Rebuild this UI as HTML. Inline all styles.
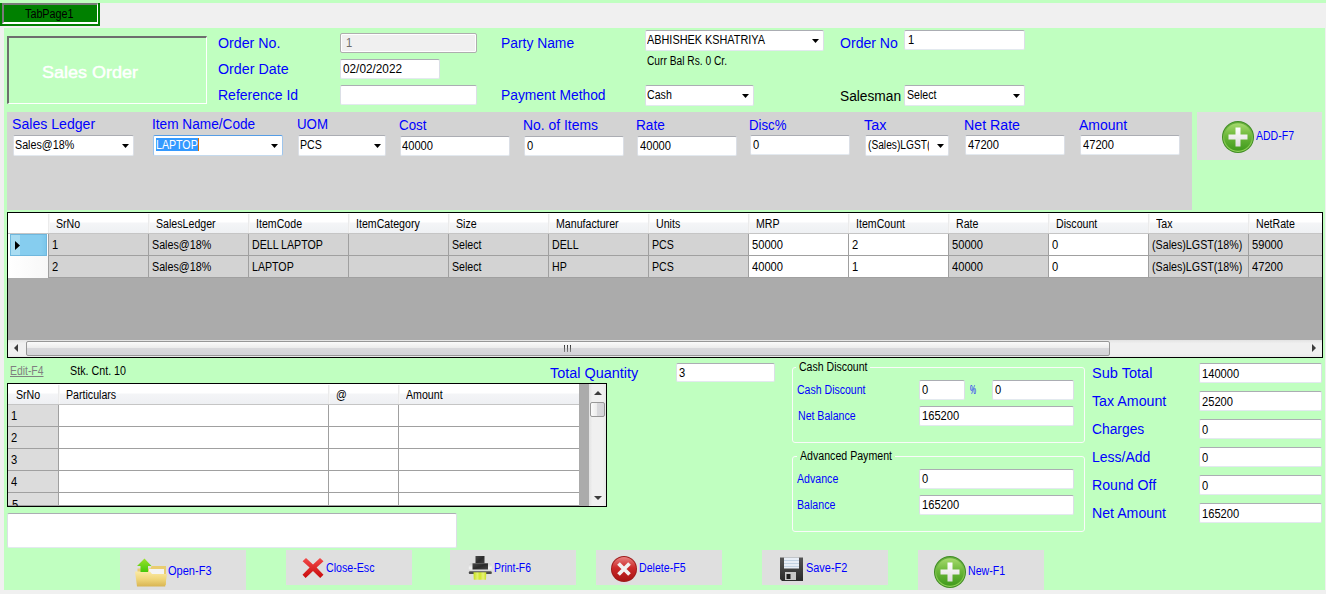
<!DOCTYPE html>
<html><head><meta charset="utf-8"><style>
html,body{margin:0;padding:0}
body{width:1326px;height:594px;position:relative;overflow:hidden;background:#f0f0f0;font-family:"Liberation Sans",sans-serif}
body>div{position:absolute}
div>div{position:absolute}
.t{white-space:nowrap}
</style></head><body>
<div style="left:0px;top:0px;width:1326px;height:3px;background:#c0ffc0"></div>
<div style="left:4px;top:28px;width:1321px;height:562px;background:#c0ffc0"></div>
<div style="left:0px;top:3px;width:100px;height:23px;background:#008000"></div>
<div style="left:2px;top:3px;width:96px;height:21px;border-top:2px solid #7a7a7a;border-left:2px solid #7a7a7a;border-right:1px solid #fff;border-bottom:2px solid #fff;box-sizing:border-box"></div>
<div class="t" style="left:25px;top:8px;font-size:12px;line-height:12px;color:#000;transform:scaleX(0.898);transform-origin:0 0;">TabPage1</div>
<div style="left:7px;top:36px;width:200px;height:68px;border-top:2px solid #6d6d6d;border-left:2px solid #6d6d6d;border-right:1px solid #fff;border-bottom:1px solid #fff;box-sizing:border-box"></div>
<div class="t" style="left:42px;top:64px;font-size:17px;line-height:17px;color:#fff;transform:scaleX(1.059);transform-origin:0 0;-webkit-text-stroke:0.45px #fff">Sales Order</div>
<div class="t" style="left:218px;top:36px;font-size:14px;line-height:14px;color:#0000ff;transform:scaleX(1.016);transform-origin:0 0;">Order No.</div>
<div class="t" style="left:218px;top:62px;font-size:14px;line-height:14px;color:#0000ff;transform:scaleX(1.019);transform-origin:0 0;">Order Date</div>
<div class="t" style="left:218px;top:88px;font-size:14px;line-height:14px;color:#0000ff;">Reference Id</div>
<div class="t" style="left:501px;top:36px;font-size:14px;line-height:14px;color:#0000ff;transform:scaleX(0.989);transform-origin:0 0;">Party Name</div>
<div class="t" style="left:501px;top:88px;font-size:14px;line-height:14px;color:#0000ff;transform:scaleX(0.988);transform-origin:0 0;">Payment Method</div>
<div class="t" style="left:840px;top:36px;font-size:14px;line-height:14px;color:#0000ff;transform:scaleX(1.005);transform-origin:0 0;">Order No</div>
<div class="t" style="left:840px;top:89px;font-size:14px;line-height:14px;color:#000;transform:scaleX(0.981);transform-origin:0 0;">Salesman</div>
<div style="left:340px;top:33px;width:137px;height:20px;background:#f0f0f0;border-top:1px solid #abadb3;border-left:1px solid #dbdfe6;border-right:1px solid #dbdfe6;border-bottom:1px solid #e3e9ef;border-radius:2px;box-sizing:border-box;box-shadow:inset 0 0 0 1px #fff;border-color:#aeaeae"></div>
<div class="t" style="left:346px;top:37px;font-size:12px;line-height:12px;color:#6d6d6d;transform:scaleX(0.930);transform-origin:0 0;">1</div>
<div style="left:340px;top:59px;width:100px;height:20px;background:#fff;border-top:1px solid #abadb3;border-left:1px solid #dbdfe6;border-right:1px solid #dbdfe6;border-bottom:1px solid #e3e9ef;border-radius:2px;box-sizing:border-box;box-shadow:inset 0 0 0 1px #fff;"></div>
<div class="t" style="left:343px;top:63px;font-size:12px;line-height:12px;color:#000;transform:scaleX(0.983);transform-origin:0 0;">02/02/2022</div>
<div style="left:340px;top:85px;width:137px;height:20px;background:#fff;border-top:1px solid #abadb3;border-left:1px solid #dbdfe6;border-right:1px solid #dbdfe6;border-bottom:1px solid #e3e9ef;border-radius:2px;box-sizing:border-box;box-shadow:inset 0 0 0 1px #fff;"></div>
<div style="left:904px;top:30px;width:121px;height:20px;background:#fff;border-top:1px solid #abadb3;border-left:1px solid #dbdfe6;border-right:1px solid #dbdfe6;border-bottom:1px solid #e3e9ef;border-radius:2px;box-sizing:border-box;box-shadow:inset 0 0 0 1px #fff;"></div>
<div class="t" style="left:908px;top:34px;font-size:12px;line-height:12px;color:#000;transform:scaleX(0.930);transform-origin:0 0;">1</div>
<div style="left:645px;top:30px;width:179px;height:21px;background:#fff;border-top:1px solid #abadb3;border-left:1px solid #dbdfe6;border-right:1px solid #dbdfe6;border-bottom:1px solid #e3e9ef;border-radius:2px;box-sizing:border-box;"></div>
<div class="t" style="left:647px;top:34px;font-size:12px;line-height:12px;color:#000;transform:scaleX(0.906);transform-origin:0 0;">ABHISHEK KSHATRIYA</div>
<svg style="position:absolute;left:812px;top:39px" width="7" height="4" viewBox="0 0 7 4"><path d="M0 0H7L3.5 4z" fill="#000"/></svg>
<div class="t" style="left:647px;top:55px;font-size:12px;line-height:12px;color:#000;transform:scaleX(0.851);transform-origin:0 0;">Curr Bal Rs. 0 Cr.</div>
<div style="left:645px;top:85px;width:109px;height:21px;background:#fff;border-top:1px solid #abadb3;border-left:1px solid #dbdfe6;border-right:1px solid #dbdfe6;border-bottom:1px solid #e3e9ef;border-radius:2px;box-sizing:border-box;"></div>
<div class="t" style="left:647px;top:89px;font-size:12px;line-height:12px;color:#000;transform:scaleX(0.885);transform-origin:0 0;">Cash</div>
<svg style="position:absolute;left:742px;top:94px" width="7" height="4" viewBox="0 0 7 4"><path d="M0 0H7L3.5 4z" fill="#000"/></svg>
<div style="left:904px;top:85px;width:121px;height:21px;background:#fff;border-top:1px solid #abadb3;border-left:1px solid #dbdfe6;border-right:1px solid #dbdfe6;border-bottom:1px solid #e3e9ef;border-radius:2px;box-sizing:border-box;"></div>
<div class="t" style="left:907px;top:89px;font-size:12px;line-height:12px;color:#000;transform:scaleX(0.885);transform-origin:0 0;">Select</div>
<svg style="position:absolute;left:1013px;top:94px" width="7" height="4" viewBox="0 0 7 4"><path d="M0 0H7L3.5 4z" fill="#000"/></svg>
<div style="left:7px;top:112px;width:1185px;height:98px;background:#d3d3d3"></div>
<div class="t" style="left:12px;top:117px;font-size:14px;line-height:14px;color:#0000ff;transform:scaleX(1.008);transform-origin:0 0;">Sales Ledger</div>
<div class="t" style="left:152px;top:117px;font-size:14px;line-height:14px;color:#0000ff;transform:scaleX(0.975);transform-origin:0 0;">Item Name/Code</div>
<div class="t" style="left:297px;top:117px;font-size:14px;line-height:14px;color:#0000ff;transform:scaleX(0.948);transform-origin:0 0;">UOM</div>
<div class="t" style="left:399px;top:118px;font-size:14px;line-height:14px;color:#0000ff;transform:scaleX(0.952);transform-origin:0 0;">Cost</div>
<div class="t" style="left:523px;top:118px;font-size:14px;line-height:14px;color:#0000ff;transform:scaleX(0.993);transform-origin:0 0;">No. of Items</div>
<div class="t" style="left:636px;top:118px;font-size:14px;line-height:14px;color:#0000ff;transform:scaleX(0.973);transform-origin:0 0;">Rate</div>
<div class="t" style="left:749px;top:118px;font-size:14px;line-height:14px;color:#0000ff;transform:scaleX(0.943);transform-origin:0 0;">Disc%</div>
<div class="t" style="left:864px;top:118px;font-size:14px;line-height:14px;color:#0000ff;transform:scaleX(1.027);transform-origin:0 0;">Tax</div>
<div class="t" style="left:964px;top:118px;font-size:14px;line-height:14px;color:#0000ff;transform:scaleX(1.013);transform-origin:0 0;">Net Rate</div>
<div class="t" style="left:1079px;top:118px;font-size:14px;line-height:14px;color:#0000ff;">Amount</div>
<div style="left:13px;top:135px;width:121px;height:21px;background:#fff;border-top:1px solid #abadb3;border-left:1px solid #dbdfe6;border-right:1px solid #dbdfe6;border-bottom:1px solid #e3e9ef;border-radius:2px;box-sizing:border-box;"></div>
<div class="t" style="left:15px;top:139px;font-size:12px;line-height:12px;color:#000;transform:scaleX(0.894);transform-origin:0 0;">Sales@18%</div>
<svg style="position:absolute;left:122px;top:144px" width="7" height="4" viewBox="0 0 7 4"><path d="M0 0H7L3.5 4z" fill="#000"/></svg>
<div style="left:153px;top:135px;width:130px;height:21px;background:#fff;border:1px solid #569de5;border-bottom-color:#c5daed;border-left-color:#9ec5ec;border-right-color:#9ec5ec;border-radius:2px;box-sizing:border-box"></div>
<div style="left:156px;top:138px;width:43px;height:13px;background:#3399ff"></div>
<div class="t" style="left:156px;top:139px;font-size:12px;line-height:12px;color:#fff;transform:scaleX(0.885);transform-origin:0 0;">LAPTOP</div>
<div style="left:198px;top:138px;width:1px;height:13px;background:#e07000"></div>
<svg style="position:absolute;left:271px;top:144px" width="7" height="4" viewBox="0 0 7 4"><path d="M0 0H7L3.5 4z" fill="#000"/></svg>
<div style="left:298px;top:135px;width:88px;height:21px;background:#fff;border-top:1px solid #abadb3;border-left:1px solid #dbdfe6;border-right:1px solid #dbdfe6;border-bottom:1px solid #e3e9ef;border-radius:2px;box-sizing:border-box;"></div>
<div class="t" style="left:300px;top:139px;font-size:12px;line-height:12px;color:#000;transform:scaleX(0.885);transform-origin:0 0;">PCS</div>
<svg style="position:absolute;left:374px;top:144px" width="7" height="4" viewBox="0 0 7 4"><path d="M0 0H7L3.5 4z" fill="#000"/></svg>
<div style="left:400px;top:136px;width:110px;height:20px;background:#fff;border-top:1px solid #abadb3;border-left:1px solid #dbdfe6;border-right:1px solid #dbdfe6;border-bottom:1px solid #e3e9ef;border-radius:2px;box-sizing:border-box;box-shadow:inset 0 0 0 1px #fff;"></div>
<div class="t" style="left:402px;top:140px;font-size:12px;line-height:12px;color:#000;transform:scaleX(0.930);transform-origin:0 0;">40000</div>
<div style="left:524px;top:136px;width:100px;height:20px;background:#fff;border-top:1px solid #abadb3;border-left:1px solid #dbdfe6;border-right:1px solid #dbdfe6;border-bottom:1px solid #e3e9ef;border-radius:2px;box-sizing:border-box;box-shadow:inset 0 0 0 1px #fff;"></div>
<div class="t" style="left:527px;top:140px;font-size:12px;line-height:12px;color:#000;transform:scaleX(0.930);transform-origin:0 0;">0</div>
<div style="left:637px;top:136px;width:100px;height:20px;background:#fff;border-top:1px solid #abadb3;border-left:1px solid #dbdfe6;border-right:1px solid #dbdfe6;border-bottom:1px solid #e3e9ef;border-radius:2px;box-sizing:border-box;box-shadow:inset 0 0 0 1px #fff;"></div>
<div class="t" style="left:640px;top:140px;font-size:12px;line-height:12px;color:#000;transform:scaleX(0.930);transform-origin:0 0;">40000</div>
<div style="left:750px;top:135px;width:100px;height:20px;background:#fff;border-top:1px solid #abadb3;border-left:1px solid #dbdfe6;border-right:1px solid #dbdfe6;border-bottom:1px solid #e3e9ef;border-radius:2px;box-sizing:border-box;box-shadow:inset 0 0 0 1px #fff;"></div>
<div class="t" style="left:753px;top:139px;font-size:12px;line-height:12px;color:#000;transform:scaleX(0.930);transform-origin:0 0;">0</div>
<div style="left:865px;top:135px;width:84px;height:21px;background:#fff;border-top:1px solid #abadb3;border-left:1px solid #dbdfe6;border-right:1px solid #dbdfe6;border-bottom:1px solid #e3e9ef;border-radius:2px;box-sizing:border-box;"></div>
<div style="left:868px;top:138px;width:61px;height:14px;overflow:hidden">
<div class="t" style="left:0;top:1px;font-size:12px;line-height:12px;transform:scaleX(0.85);transform-origin:0 0">(Sales)LGST(18%)</div>
</div>
<svg style="position:absolute;left:937px;top:144px" width="7" height="4" viewBox="0 0 7 4"><path d="M0 0H7L3.5 4z" fill="#000"/></svg>
<div style="left:965px;top:135px;width:100px;height:20px;background:#fff;border-top:1px solid #abadb3;border-left:1px solid #dbdfe6;border-right:1px solid #dbdfe6;border-bottom:1px solid #e3e9ef;border-radius:2px;box-sizing:border-box;box-shadow:inset 0 0 0 1px #fff;"></div>
<div class="t" style="left:968px;top:139px;font-size:12px;line-height:12px;color:#000;transform:scaleX(0.930);transform-origin:0 0;">47200</div>
<div style="left:1080px;top:135px;width:100px;height:20px;background:#fff;border-top:1px solid #abadb3;border-left:1px solid #dbdfe6;border-right:1px solid #dbdfe6;border-bottom:1px solid #e3e9ef;border-radius:2px;box-sizing:border-box;box-shadow:inset 0 0 0 1px #fff;"></div>
<div class="t" style="left:1083px;top:139px;font-size:12px;line-height:12px;color:#000;transform:scaleX(0.930);transform-origin:0 0;">47200</div>
<div style="left:1197px;top:112px;width:125px;height:48px;background:#dfdfdf"></div>
<svg style="position:absolute;left:1222px;top:121px" width="32" height="32" viewBox="0 0 32 32"><defs><linearGradient id="gg" x1="0" y1="0" x2="0" y2="1"><stop offset="0" stop-color="#a6da6e"/><stop offset="0.45" stop-color="#6cb83a"/><stop offset="1" stop-color="#3f9a1c"/></linearGradient>
<linearGradient id="gr" x1="0" y1="0" x2="0" y2="1"><stop offset="0" stop-color="#62aa3a"/><stop offset="1" stop-color="#92d25a"/></linearGradient>
<linearGradient id="pw" x1="0" y1="0" x2="0" y2="1"><stop offset="0" stop-color="#ffffff"/><stop offset="1" stop-color="#dcdcdc"/></linearGradient></defs><circle cx="16" cy="16" r="16" fill="#3f8d22"/><circle cx="16" cy="16" r="15" fill="url(#gr)"/><circle cx="16" cy="16" r="13.8" fill="url(#gg)"/><path d="M13.5 6.5h5v7h7v5h-7v7h-5v-7h-7v-5h7z" fill="url(#pw)"/></svg>
<div class="t" style="left:1256px;top:130px;font-size:12px;line-height:12px;color:#0000ff;transform:scaleX(0.877);transform-origin:0 0;">ADD-F7</div>
<div style="left:7px;top:212px;width:1316px;height:146px;background:#ababab;border:1px solid #000;box-sizing:border-box"></div>
<div style="left:8px;top:213px;width:1314px;height:21px;background:linear-gradient(#ffffff,#ffffff 45%,#f4f5f7 50%,#eef0f3);border-bottom:1px solid #c5c5c5;box-sizing:border-box"></div>
<div style="left:8px;top:213px;width:40px;height:20px;background:#fff"></div>
<div style="left:48px;top:214px;width:2px;height:19px;background:linear-gradient(90deg,#e6e6e6,#fbfbfb)"></div>
<div class="t" style="left:56px;top:218px;font-size:12px;line-height:12px;color:#000;transform:scaleX(0.885);transform-origin:0 0;">SrNo</div>
<div style="left:148px;top:214px;width:2px;height:19px;background:linear-gradient(90deg,#e6e6e6,#fbfbfb)"></div>
<div class="t" style="left:156px;top:218px;font-size:12px;line-height:12px;color:#000;transform:scaleX(0.885);transform-origin:0 0;">SalesLedger</div>
<div style="left:248px;top:214px;width:2px;height:19px;background:linear-gradient(90deg,#e6e6e6,#fbfbfb)"></div>
<div class="t" style="left:256px;top:218px;font-size:12px;line-height:12px;color:#000;transform:scaleX(0.885);transform-origin:0 0;">ItemCode</div>
<div style="left:348px;top:214px;width:2px;height:19px;background:linear-gradient(90deg,#e6e6e6,#fbfbfb)"></div>
<div class="t" style="left:356px;top:218px;font-size:12px;line-height:12px;color:#000;transform:scaleX(0.885);transform-origin:0 0;">ItemCategory</div>
<div style="left:448px;top:214px;width:2px;height:19px;background:linear-gradient(90deg,#e6e6e6,#fbfbfb)"></div>
<div class="t" style="left:456px;top:218px;font-size:12px;line-height:12px;color:#000;transform:scaleX(0.885);transform-origin:0 0;">Size</div>
<div style="left:548px;top:214px;width:2px;height:19px;background:linear-gradient(90deg,#e6e6e6,#fbfbfb)"></div>
<div class="t" style="left:556px;top:218px;font-size:12px;line-height:12px;color:#000;transform:scaleX(0.885);transform-origin:0 0;">Manufacturer</div>
<div style="left:648px;top:214px;width:2px;height:19px;background:linear-gradient(90deg,#e6e6e6,#fbfbfb)"></div>
<div class="t" style="left:656px;top:218px;font-size:12px;line-height:12px;color:#000;transform:scaleX(0.885);transform-origin:0 0;">Units</div>
<div style="left:748px;top:214px;width:2px;height:19px;background:linear-gradient(90deg,#e6e6e6,#fbfbfb)"></div>
<div class="t" style="left:756px;top:218px;font-size:12px;line-height:12px;color:#000;transform:scaleX(0.885);transform-origin:0 0;">MRP</div>
<div style="left:848px;top:214px;width:2px;height:19px;background:linear-gradient(90deg,#e6e6e6,#fbfbfb)"></div>
<div class="t" style="left:856px;top:218px;font-size:12px;line-height:12px;color:#000;transform:scaleX(0.885);transform-origin:0 0;">ItemCount</div>
<div style="left:948px;top:214px;width:2px;height:19px;background:linear-gradient(90deg,#e6e6e6,#fbfbfb)"></div>
<div class="t" style="left:956px;top:218px;font-size:12px;line-height:12px;color:#000;transform:scaleX(0.885);transform-origin:0 0;">Rate</div>
<div style="left:1048px;top:214px;width:2px;height:19px;background:linear-gradient(90deg,#e6e6e6,#fbfbfb)"></div>
<div class="t" style="left:1056px;top:218px;font-size:12px;line-height:12px;color:#000;transform:scaleX(0.885);transform-origin:0 0;">Discount</div>
<div style="left:1148px;top:214px;width:2px;height:19px;background:linear-gradient(90deg,#e6e6e6,#fbfbfb)"></div>
<div class="t" style="left:1156px;top:218px;font-size:12px;line-height:12px;color:#000;transform:scaleX(0.885);transform-origin:0 0;">Tax</div>
<div style="left:1248px;top:214px;width:2px;height:19px;background:linear-gradient(90deg,#e6e6e6,#fbfbfb)"></div>
<div class="t" style="left:1256px;top:218px;font-size:12px;line-height:12px;color:#000;transform:scaleX(0.885);transform-origin:0 0;">NetRate</div>
<div style="left:8px;top:234px;width:40px;height:22px;background:#fff"></div>
<div style="left:10px;top:234px;width:37px;height:22px;background:linear-gradient(90deg,#a8dcf2 0,#a8dcf2 9px,#86cdef 9px,#86cdef 30px,#7cc6ea);border:1px solid #6fb7dd;box-sizing:border-box"></div>
<svg style="position:absolute;left:15px;top:241px" width="5" height="9" viewBox="0 0 5 9"><path d="M0 0L5 4.5L0 9z" fill="#000"/></svg>
<div style="left:48px;top:234px;width:100px;height:22px;background:#d3d3d3;border-left:1px solid #a0a0a0;border-bottom:1px solid #a0a0a0;box-sizing:border-box"></div>
<div class="t" style="left:52px;top:239px;font-size:12px;line-height:12px;color:#000;transform:scaleX(0.930);transform-origin:0 0;">1</div>
<div style="left:148px;top:234px;width:100px;height:22px;background:#d3d3d3;border-left:1px solid #a0a0a0;border-bottom:1px solid #a0a0a0;box-sizing:border-box"></div>
<div class="t" style="left:152px;top:239px;font-size:12px;line-height:12px;color:#000;transform:scaleX(0.894);transform-origin:0 0;">Sales@18%</div>
<div style="left:248px;top:234px;width:100px;height:22px;background:#d3d3d3;border-left:1px solid #a0a0a0;border-bottom:1px solid #a0a0a0;box-sizing:border-box"></div>
<div class="t" style="left:252px;top:239px;font-size:12px;line-height:12px;color:#000;transform:scaleX(0.885);transform-origin:0 0;">DELL LAPTOP</div>
<div style="left:348px;top:234px;width:100px;height:22px;background:#d3d3d3;border-left:1px solid #a0a0a0;border-bottom:1px solid #a0a0a0;box-sizing:border-box"></div>
<div style="left:448px;top:234px;width:100px;height:22px;background:#d3d3d3;border-left:1px solid #a0a0a0;border-bottom:1px solid #a0a0a0;box-sizing:border-box"></div>
<div class="t" style="left:452px;top:239px;font-size:12px;line-height:12px;color:#000;transform:scaleX(0.885);transform-origin:0 0;">Select</div>
<div style="left:548px;top:234px;width:100px;height:22px;background:#d3d3d3;border-left:1px solid #a0a0a0;border-bottom:1px solid #a0a0a0;box-sizing:border-box"></div>
<div class="t" style="left:552px;top:239px;font-size:12px;line-height:12px;color:#000;transform:scaleX(0.885);transform-origin:0 0;">DELL</div>
<div style="left:648px;top:234px;width:100px;height:22px;background:#d3d3d3;border-left:1px solid #a0a0a0;border-bottom:1px solid #a0a0a0;box-sizing:border-box"></div>
<div class="t" style="left:652px;top:239px;font-size:12px;line-height:12px;color:#000;transform:scaleX(0.885);transform-origin:0 0;">PCS</div>
<div style="left:748px;top:234px;width:100px;height:22px;background:#fff;border-left:1px solid #a0a0a0;border-bottom:1px solid #a0a0a0;box-sizing:border-box"></div>
<div class="t" style="left:752px;top:239px;font-size:12px;line-height:12px;color:#000;transform:scaleX(0.930);transform-origin:0 0;">50000</div>
<div style="left:848px;top:234px;width:100px;height:22px;background:#fff;border-left:1px solid #a0a0a0;border-bottom:1px solid #a0a0a0;box-sizing:border-box"></div>
<div class="t" style="left:852px;top:239px;font-size:12px;line-height:12px;color:#000;transform:scaleX(0.930);transform-origin:0 0;">2</div>
<div style="left:948px;top:234px;width:100px;height:22px;background:#d3d3d3;border-left:1px solid #a0a0a0;border-bottom:1px solid #a0a0a0;box-sizing:border-box"></div>
<div class="t" style="left:952px;top:239px;font-size:12px;line-height:12px;color:#000;transform:scaleX(0.930);transform-origin:0 0;">50000</div>
<div style="left:1048px;top:234px;width:100px;height:22px;background:#fff;border-left:1px solid #a0a0a0;border-bottom:1px solid #a0a0a0;box-sizing:border-box"></div>
<div class="t" style="left:1052px;top:239px;font-size:12px;line-height:12px;color:#000;transform:scaleX(0.930);transform-origin:0 0;">0</div>
<div style="left:1148px;top:234px;width:100px;height:22px;background:#d3d3d3;border-left:1px solid #a0a0a0;border-bottom:1px solid #a0a0a0;box-sizing:border-box"></div>
<div class="t" style="left:1152px;top:239px;font-size:12px;line-height:12px;color:#000;transform:scaleX(0.891);transform-origin:0 0;">(Sales)LGST(18%)</div>
<div style="left:1248px;top:234px;width:74px;height:22px;background:#d3d3d3;border-left:1px solid #a0a0a0;border-bottom:1px solid #a0a0a0;box-sizing:border-box"></div>
<div class="t" style="left:1252px;top:239px;font-size:12px;line-height:12px;color:#000;transform:scaleX(0.930);transform-origin:0 0;">59000</div>
<div style="left:8px;top:256px;width:40px;height:22px;background:linear-gradient(90deg,#fff,#f7f7f7)"></div>
<div style="left:48px;top:256px;width:100px;height:22px;background:#d3d3d3;border-left:1px solid #a0a0a0;border-bottom:1px solid #a0a0a0;box-sizing:border-box"></div>
<div class="t" style="left:52px;top:261px;font-size:12px;line-height:12px;color:#000;transform:scaleX(0.930);transform-origin:0 0;">2</div>
<div style="left:148px;top:256px;width:100px;height:22px;background:#d3d3d3;border-left:1px solid #a0a0a0;border-bottom:1px solid #a0a0a0;box-sizing:border-box"></div>
<div class="t" style="left:152px;top:261px;font-size:12px;line-height:12px;color:#000;transform:scaleX(0.894);transform-origin:0 0;">Sales@18%</div>
<div style="left:248px;top:256px;width:100px;height:22px;background:#d3d3d3;border-left:1px solid #a0a0a0;border-bottom:1px solid #a0a0a0;box-sizing:border-box"></div>
<div class="t" style="left:252px;top:261px;font-size:12px;line-height:12px;color:#000;transform:scaleX(0.885);transform-origin:0 0;">LAPTOP</div>
<div style="left:348px;top:256px;width:100px;height:22px;background:#d3d3d3;border-left:1px solid #a0a0a0;border-bottom:1px solid #a0a0a0;box-sizing:border-box"></div>
<div style="left:448px;top:256px;width:100px;height:22px;background:#d3d3d3;border-left:1px solid #a0a0a0;border-bottom:1px solid #a0a0a0;box-sizing:border-box"></div>
<div class="t" style="left:452px;top:261px;font-size:12px;line-height:12px;color:#000;transform:scaleX(0.885);transform-origin:0 0;">Select</div>
<div style="left:548px;top:256px;width:100px;height:22px;background:#d3d3d3;border-left:1px solid #a0a0a0;border-bottom:1px solid #a0a0a0;box-sizing:border-box"></div>
<div class="t" style="left:552px;top:261px;font-size:12px;line-height:12px;color:#000;transform:scaleX(0.885);transform-origin:0 0;">HP</div>
<div style="left:648px;top:256px;width:100px;height:22px;background:#d3d3d3;border-left:1px solid #a0a0a0;border-bottom:1px solid #a0a0a0;box-sizing:border-box"></div>
<div class="t" style="left:652px;top:261px;font-size:12px;line-height:12px;color:#000;transform:scaleX(0.885);transform-origin:0 0;">PCS</div>
<div style="left:748px;top:256px;width:100px;height:22px;background:#fff;border-left:1px solid #a0a0a0;border-bottom:1px solid #a0a0a0;box-sizing:border-box"></div>
<div class="t" style="left:752px;top:261px;font-size:12px;line-height:12px;color:#000;transform:scaleX(0.930);transform-origin:0 0;">40000</div>
<div style="left:848px;top:256px;width:100px;height:22px;background:#fff;border-left:1px solid #a0a0a0;border-bottom:1px solid #a0a0a0;box-sizing:border-box"></div>
<div class="t" style="left:852px;top:261px;font-size:12px;line-height:12px;color:#000;transform:scaleX(0.930);transform-origin:0 0;">1</div>
<div style="left:948px;top:256px;width:100px;height:22px;background:#d3d3d3;border-left:1px solid #a0a0a0;border-bottom:1px solid #a0a0a0;box-sizing:border-box"></div>
<div class="t" style="left:952px;top:261px;font-size:12px;line-height:12px;color:#000;transform:scaleX(0.930);transform-origin:0 0;">40000</div>
<div style="left:1048px;top:256px;width:100px;height:22px;background:#fff;border-left:1px solid #a0a0a0;border-bottom:1px solid #a0a0a0;box-sizing:border-box"></div>
<div class="t" style="left:1052px;top:261px;font-size:12px;line-height:12px;color:#000;transform:scaleX(0.930);transform-origin:0 0;">0</div>
<div style="left:1148px;top:256px;width:100px;height:22px;background:#d3d3d3;border-left:1px solid #a0a0a0;border-bottom:1px solid #a0a0a0;box-sizing:border-box"></div>
<div class="t" style="left:1152px;top:261px;font-size:12px;line-height:12px;color:#000;transform:scaleX(0.891);transform-origin:0 0;">(Sales)LGST(18%)</div>
<div style="left:1248px;top:256px;width:74px;height:22px;background:#d3d3d3;border-left:1px solid #a0a0a0;border-bottom:1px solid #a0a0a0;box-sizing:border-box"></div>
<div class="t" style="left:1252px;top:261px;font-size:12px;line-height:12px;color:#000;transform:scaleX(0.930);transform-origin:0 0;">47200</div>
<div style="left:8px;top:340px;width:1314px;height:17px;background:linear-gradient(#e3e3e3,#f0f0f0 20%,#f0f0f0 80%,#e8e8e8);box-sizing:border-box"></div>
<svg style="position:absolute;left:14px;top:344px" width="4" height="8" viewBox="0 0 4 8"><path d="M4 0V8L0 4z" fill="#3c3c3c"/></svg>
<svg style="position:absolute;left:1312px;top:344px" width="4" height="8" viewBox="0 0 4 8"><path d="M0 0V8L4 4z" fill="#3c3c3c"/></svg>
<div style="left:26px;top:341px;width:1084px;height:15px;background:linear-gradient(#fbfbfb,#ececec 45%,#d9d9dc 50%,#d4d4d8);border:1px solid #979797;border-radius:2px;box-sizing:border-box"></div>
<div style="left:564px;top:345px;width:1px;height:7px;background:linear-gradient(#333,#888)"></div>
<div style="left:567px;top:345px;width:1px;height:7px;background:linear-gradient(#333,#888)"></div>
<div style="left:570px;top:345px;width:1px;height:7px;background:linear-gradient(#333,#888)"></div>
<div class="t" style="left:10px;top:365px;font-size:12px;line-height:12px;color:#808080;transform:scaleX(0.866);transform-origin:0 0;text-decoration:underline">Edit-F4</div>
<div class="t" style="left:70px;top:365px;font-size:12px;line-height:12px;color:#000;transform:scaleX(0.894);transform-origin:0 0;">Stk. Cnt. 10</div>
<div class="t" style="left:550px;top:366px;font-size:14px;line-height:14px;color:#0000ff;transform:scaleX(1.030);transform-origin:0 0;">Total Quantity</div>
<div style="left:676px;top:363px;width:99px;height:19px;background:#fff;border-top:1px solid #abadb3;border-left:1px solid #dbdfe6;border-right:1px solid #dbdfe6;border-bottom:1px solid #e3e9ef;border-radius:2px;box-sizing:border-box;box-shadow:inset 0 0 0 1px #fff;"></div>
<div class="t" style="left:679px;top:367px;font-size:12px;line-height:12px;color:#000;transform:scaleX(0.930);transform-origin:0 0;">3</div>
<div style="left:7px;top:383px;width:600px;height:124px;background:#fff;border:1px solid #000;box-sizing:border-box;overflow:hidden"></div>
<div style="left:8px;top:384px;width:571px;height:21px;background:linear-gradient(#ffffff,#ffffff 45%,#f4f5f7 50%,#eef0f3);border-bottom:1px solid #c5c5c5;box-sizing:border-box"></div>
<div class="t" style="left:16px;top:389px;font-size:12px;line-height:12px;color:#000;transform:scaleX(0.885);transform-origin:0 0;">SrNo</div>
<div style="left:58px;top:385px;width:2px;height:19px;background:linear-gradient(90deg,#e6e6e6,#fbfbfb)"></div>
<div class="t" style="left:66px;top:389px;font-size:12px;line-height:12px;color:#000;transform:scaleX(0.885);transform-origin:0 0;">Particulars</div>
<div style="left:328px;top:385px;width:2px;height:19px;background:linear-gradient(90deg,#e6e6e6,#fbfbfb)"></div>
<div class="t" style="left:336px;top:389px;font-size:12px;line-height:12px;color:#000;transform:scaleX(0.885);transform-origin:0 0;">@</div>
<div style="left:398px;top:385px;width:2px;height:19px;background:linear-gradient(90deg,#e6e6e6,#fbfbfb)"></div>
<div class="t" style="left:406px;top:389px;font-size:12px;line-height:12px;color:#000;transform:scaleX(0.885);transform-origin:0 0;">Amount</div>
<div style="left:8px;top:405px;width:51px;height:22px;background:#dcdcdc;border-right:1px solid #a0a0a0;border-bottom:1px solid #a0a0a0;box-sizing:border-box"></div>
<div style="left:59px;top:405px;width:520px;height:22px;border-bottom:1px solid #a0a0a0;box-sizing:border-box"></div>
<div style="left:328px;top:405px;width:1px;height:22px;background:#a0a0a0"></div>
<div style="left:398px;top:405px;width:1px;height:22px;background:#a0a0a0"></div>
<div class="t" style="left:11px;top:410px;font-size:12px;line-height:12px;color:#000;transform:scaleX(0.930);transform-origin:0 0;">1</div>
<div style="left:8px;top:427px;width:51px;height:22px;background:#dcdcdc;border-right:1px solid #a0a0a0;border-bottom:1px solid #a0a0a0;box-sizing:border-box"></div>
<div style="left:59px;top:427px;width:520px;height:22px;border-bottom:1px solid #a0a0a0;box-sizing:border-box"></div>
<div style="left:328px;top:427px;width:1px;height:22px;background:#a0a0a0"></div>
<div style="left:398px;top:427px;width:1px;height:22px;background:#a0a0a0"></div>
<div class="t" style="left:11px;top:432px;font-size:12px;line-height:12px;color:#000;transform:scaleX(0.930);transform-origin:0 0;">2</div>
<div style="left:8px;top:449px;width:51px;height:22px;background:#dcdcdc;border-right:1px solid #a0a0a0;border-bottom:1px solid #a0a0a0;box-sizing:border-box"></div>
<div style="left:59px;top:449px;width:520px;height:22px;border-bottom:1px solid #a0a0a0;box-sizing:border-box"></div>
<div style="left:328px;top:449px;width:1px;height:22px;background:#a0a0a0"></div>
<div style="left:398px;top:449px;width:1px;height:22px;background:#a0a0a0"></div>
<div class="t" style="left:11px;top:454px;font-size:12px;line-height:12px;color:#000;transform:scaleX(0.930);transform-origin:0 0;">3</div>
<div style="left:8px;top:471px;width:51px;height:22px;background:#dcdcdc;border-right:1px solid #a0a0a0;border-bottom:1px solid #a0a0a0;box-sizing:border-box"></div>
<div style="left:59px;top:471px;width:520px;height:22px;border-bottom:1px solid #a0a0a0;box-sizing:border-box"></div>
<div style="left:328px;top:471px;width:1px;height:22px;background:#a0a0a0"></div>
<div style="left:398px;top:471px;width:1px;height:22px;background:#a0a0a0"></div>
<div class="t" style="left:11px;top:476px;font-size:12px;line-height:12px;color:#000;transform:scaleX(0.930);transform-origin:0 0;">4</div>
<div style="left:8px;top:493px;width:51px;height:13px;background:#dcdcdc;border-right:1px solid #a0a0a0;border-bottom:1px solid #a0a0a0;box-sizing:border-box"></div>
<div style="left:59px;top:493px;width:520px;height:13px;border-bottom:1px solid #a0a0a0;box-sizing:border-box"></div>
<div style="left:328px;top:493px;width:1px;height:13px;background:#a0a0a0"></div>
<div style="left:398px;top:493px;width:1px;height:13px;background:#a0a0a0"></div>
<div style="left:8px;top:493px;width:50px;height:13px;overflow:hidden"><div class="t" style="left:4px;top:6px;font-size:12px;line-height:12px;transform:scaleX(0.93);transform-origin:0 0">5</div></div>
<div style="left:579px;top:384px;width:10px;height:122px;background:#ababab"></div>
<div style="left:589px;top:384px;width:17px;height:122px;background:linear-gradient(90deg,#e3e3e3,#f0f0f0 20%,#f0f0f0 80%,#e8e8e8)"></div>
<svg style="position:absolute;left:594px;top:391px" width="8" height="4" viewBox="0 0 8 4"><path d="M0 4H8L4 0z" fill="#3c3c3c"/></svg>
<svg style="position:absolute;left:594px;top:496px" width="8" height="4" viewBox="0 0 8 4"><path d="M0 0H8L4 4z" fill="#3c3c3c"/></svg>
<div style="left:590px;top:402px;width:15px;height:15px;background:linear-gradient(90deg,#fbfbfb,#ececec 45%,#d9d9dc 50%,#d4d4d8);border:1px solid #979797;border-radius:2px;box-sizing:border-box"></div>
<div style="left:7px;top:513px;width:450px;height:35px;background:#fff;border-top:1px solid #abadb3;border-left:1px solid #dbdfe6;border-right:1px solid #dbdfe6;border-bottom:1px solid #e3e9ef;border-radius:2px;box-sizing:border-box;box-shadow:inset 0 0 0 1px #fff"></div>
<div style="left:792px;top:367px;width:293px;height:76px;border:1px solid #fafafa;border-radius:3px;box-sizing:border-box"></div>
<div style="left:796px;top:365px;width:74px;height:5px;background:#c0ffc0"></div>
<div class="t" style="left:799px;top:361px;font-size:12px;line-height:12px;color:#000;transform:scaleX(0.878);transform-origin:0 0;">Cash Discount</div>
<div class="t" style="left:797px;top:384px;font-size:12px;line-height:12px;color:#0000ff;transform:scaleX(0.878);transform-origin:0 0;">Cash Discount</div>
<div style="left:919px;top:380px;width:46px;height:20px;background:#fff;border-top:1px solid #abadb3;border-left:1px solid #dbdfe6;border-right:1px solid #dbdfe6;border-bottom:1px solid #e3e9ef;border-radius:2px;box-sizing:border-box;box-shadow:inset 0 0 0 1px #fff;"></div>
<div class="t" style="left:922px;top:384px;font-size:12px;line-height:12px;color:#000;transform:scaleX(0.930);transform-origin:0 0;">0</div>
<div class="t" style="left:970px;top:384px;font-size:12px;line-height:12px;color:#0000ff;transform:scaleX(0.562);transform-origin:0 0;">%</div>
<div style="left:992px;top:380px;width:82px;height:20px;background:#fff;border-top:1px solid #abadb3;border-left:1px solid #dbdfe6;border-right:1px solid #dbdfe6;border-bottom:1px solid #e3e9ef;border-radius:2px;box-sizing:border-box;box-shadow:inset 0 0 0 1px #fff;"></div>
<div class="t" style="left:995px;top:384px;font-size:12px;line-height:12px;color:#000;transform:scaleX(0.930);transform-origin:0 0;">0</div>
<div class="t" style="left:798px;top:410px;font-size:12px;line-height:12px;color:#0000ff;transform:scaleX(0.880);transform-origin:0 0;">Net Balance</div>
<div style="left:919px;top:406px;width:155px;height:20px;background:#fff;border-top:1px solid #abadb3;border-left:1px solid #dbdfe6;border-right:1px solid #dbdfe6;border-bottom:1px solid #e3e9ef;border-radius:2px;box-sizing:border-box;box-shadow:inset 0 0 0 1px #fff;"></div>
<div class="t" style="left:922px;top:410px;font-size:12px;line-height:12px;color:#000;transform:scaleX(0.930);transform-origin:0 0;">165200</div>
<div style="left:792px;top:456px;width:293px;height:76px;border:1px solid #fafafa;border-radius:3px;box-sizing:border-box"></div>
<div style="left:797px;top:454px;width:98px;height:5px;background:#c0ffc0"></div>
<div class="t" style="left:800px;top:450px;font-size:12px;line-height:12px;color:#000;transform:scaleX(0.884);transform-origin:0 0;">Advanced Payment</div>
<div class="t" style="left:797px;top:473px;font-size:12px;line-height:12px;color:#0000ff;transform:scaleX(0.885);transform-origin:0 0;">Advance</div>
<div style="left:919px;top:469px;width:155px;height:20px;background:#fff;border-top:1px solid #abadb3;border-left:1px solid #dbdfe6;border-right:1px solid #dbdfe6;border-bottom:1px solid #e3e9ef;border-radius:2px;box-sizing:border-box;box-shadow:inset 0 0 0 1px #fff;"></div>
<div class="t" style="left:922px;top:473px;font-size:12px;line-height:12px;color:#000;transform:scaleX(0.930);transform-origin:0 0;">0</div>
<div class="t" style="left:797px;top:499px;font-size:12px;line-height:12px;color:#0000ff;transform:scaleX(0.885);transform-origin:0 0;">Balance</div>
<div style="left:919px;top:495px;width:155px;height:20px;background:#fff;border-top:1px solid #abadb3;border-left:1px solid #dbdfe6;border-right:1px solid #dbdfe6;border-bottom:1px solid #e3e9ef;border-radius:2px;box-sizing:border-box;box-shadow:inset 0 0 0 1px #fff;"></div>
<div class="t" style="left:922px;top:499px;font-size:12px;line-height:12px;color:#000;transform:scaleX(0.930);transform-origin:0 0;">165200</div>
<div class="t" style="left:1092px;top:366px;font-size:14px;line-height:14px;color:#0000ff;transform:scaleX(1.040);transform-origin:0 0;">Sub Total</div>
<div style="left:1199px;top:363px;width:123px;height:20px;background:#fff;border-top:1px solid #abadb3;border-left:1px solid #dbdfe6;border-right:1px solid #dbdfe6;border-bottom:1px solid #e3e9ef;border-radius:2px;box-sizing:border-box;box-shadow:inset 0 0 0 1px #fff;"></div>
<div class="t" style="left:1202px;top:368px;font-size:12px;line-height:12px;color:#000;transform:scaleX(0.930);transform-origin:0 0;">140000</div>
<div class="t" style="left:1092px;top:394px;font-size:14px;line-height:14px;color:#0000ff;transform:scaleX(1.016);transform-origin:0 0;">Tax Amount</div>
<div style="left:1199px;top:391px;width:123px;height:20px;background:#fff;border-top:1px solid #abadb3;border-left:1px solid #dbdfe6;border-right:1px solid #dbdfe6;border-bottom:1px solid #e3e9ef;border-radius:2px;box-sizing:border-box;box-shadow:inset 0 0 0 1px #fff;"></div>
<div class="t" style="left:1202px;top:396px;font-size:12px;line-height:12px;color:#000;transform:scaleX(0.930);transform-origin:0 0;">25200</div>
<div class="t" style="left:1092px;top:422px;font-size:14px;line-height:14px;color:#0000ff;transform:scaleX(0.987);transform-origin:0 0;">Charges</div>
<div style="left:1199px;top:419px;width:123px;height:20px;background:#fff;border-top:1px solid #abadb3;border-left:1px solid #dbdfe6;border-right:1px solid #dbdfe6;border-bottom:1px solid #e3e9ef;border-radius:2px;box-sizing:border-box;box-shadow:inset 0 0 0 1px #fff;"></div>
<div class="t" style="left:1202px;top:424px;font-size:12px;line-height:12px;color:#000;transform:scaleX(0.930);transform-origin:0 0;">0</div>
<div class="t" style="left:1092px;top:450px;font-size:14px;line-height:14px;color:#0000ff;">Less/Add</div>
<div style="left:1199px;top:447px;width:123px;height:20px;background:#fff;border-top:1px solid #abadb3;border-left:1px solid #dbdfe6;border-right:1px solid #dbdfe6;border-bottom:1px solid #e3e9ef;border-radius:2px;box-sizing:border-box;box-shadow:inset 0 0 0 1px #fff;"></div>
<div class="t" style="left:1202px;top:452px;font-size:12px;line-height:12px;color:#000;transform:scaleX(0.930);transform-origin:0 0;">0</div>
<div class="t" style="left:1092px;top:478px;font-size:14px;line-height:14px;color:#0000ff;transform:scaleX(1.008);transform-origin:0 0;">Round Off</div>
<div style="left:1199px;top:475px;width:123px;height:20px;background:#fff;border-top:1px solid #abadb3;border-left:1px solid #dbdfe6;border-right:1px solid #dbdfe6;border-bottom:1px solid #e3e9ef;border-radius:2px;box-sizing:border-box;box-shadow:inset 0 0 0 1px #fff;"></div>
<div class="t" style="left:1202px;top:480px;font-size:12px;line-height:12px;color:#000;transform:scaleX(0.930);transform-origin:0 0;">0</div>
<div class="t" style="left:1092px;top:506px;font-size:14px;line-height:14px;color:#0000ff;transform:scaleX(1.011);transform-origin:0 0;">Net Amount</div>
<div style="left:1199px;top:503px;width:123px;height:20px;background:#fff;border-top:1px solid #abadb3;border-left:1px solid #dbdfe6;border-right:1px solid #dbdfe6;border-bottom:1px solid #e3e9ef;border-radius:2px;box-sizing:border-box;box-shadow:inset 0 0 0 1px #fff;"></div>
<div class="t" style="left:1202px;top:508px;font-size:12px;line-height:12px;color:#000;transform:scaleX(0.930);transform-origin:0 0;">165200</div>
<div style="left:120px;top:550px;width:126px;height:40px;background:#dfdfdf"></div>
<svg style="position:absolute;left:134px;top:557px" width="34" height="31" viewBox="0 0 34 31">
<defs><linearGradient id="fo" x1="0" y1="0" x2="0" y2="1"><stop offset="0" stop-color="#fbeaa6"/><stop offset="0.5" stop-color="#f0d67a"/><stop offset="1" stop-color="#d8b452"/></linearGradient>
<linearGradient id="ar" x1="0" y1="0" x2="0" y2="1"><stop offset="0" stop-color="#9be22a"/><stop offset="1" stop-color="#45c80a"/></linearGradient></defs>
<path d="M3.5 11.5h13l1-2.5h14.5v19h-28.5z" fill="#e9cd70"/>
<path d="M15 12h15v5H15z" fill="#f4f4f4"/>
<path d="M1 14.5h15l2 2.5h15l-1.8 12.5H3z" fill="url(#fo)"/>
<path d="M10.5 1.5l7 7.5h-3.5v6h-7.5v-6h-3.5z" fill="url(#ar)"/></svg>
<div class="t" style="left:168px;top:565px;font-size:12px;line-height:12px;color:#0000ff;transform:scaleX(0.919);transform-origin:0 0;">Open-F3</div>
<div style="left:286px;top:550px;width:126px;height:35px;background:#dfdfdf"></div>
<svg style="position:absolute;left:301px;top:556px" width="24" height="24" viewBox="0 0 24 24">
<defs><linearGradient id="xr" x1="0" y1="0" x2="0" y2="1"><stop offset="0" stop-color="#f24a4a"/><stop offset="1" stop-color="#c80a0a"/></linearGradient></defs>
<path d="M5 2L12 8.6L19 2L22.5 5.2L15.6 11.6L22.5 18.8L19.2 22L12 15L4.6 22L1.5 18.8L8.6 11.6L1.6 5.2z" fill="url(#xr)"/></svg>
<div class="t" style="left:326px;top:562px;font-size:12px;line-height:12px;color:#0000ff;transform:scaleX(0.887);transform-origin:0 0;">Close-Esc</div>
<div style="left:450px;top:550px;width:126px;height:35px;background:#dfdfdf"></div>
<svg style="position:absolute;left:468px;top:555px" width="25" height="26" viewBox="0 0 25 26">
<defs><linearGradient id="ps" x1="0" y1="0" x2="0" y2="1"><stop offset="0" stop-color="#d0d0d0"/><stop offset="0.45" stop-color="#f4f4f4"/><stop offset="0.7" stop-color="#d8d8d8"/><stop offset="0.8" stop-color="#ffffff"/><stop offset="1" stop-color="#808080"/></linearGradient>
<linearGradient id="pk" x1="0" y1="0" x2="1" y2="1"><stop offset="0" stop-color="#4a4a4a"/><stop offset="0.5" stop-color="#2a2a2a"/><stop offset="1" stop-color="#454545"/></linearGradient>
<linearGradient id="pg" x1="0" y1="0" x2="1" y2="0"><stop offset="0" stop-color="#c4de1c"/><stop offset="0.3" stop-color="#e2f070"/><stop offset="0.5" stop-color="#cfe628"/><stop offset="0.75" stop-color="#e8f27a"/><stop offset="1" stop-color="#c8e020"/></linearGradient></defs>
<rect x="7.5" y="1" width="9" height="8" fill="url(#pk)"/>
<rect x="0.8" y="8.3" width="23" height="10.6" rx="2.5" fill="url(#ps)"/>
<rect x="4.5" y="8.3" width="15.5" height="6.2" fill="url(#pk)"/>
<rect x="0.8" y="16.3" width="23" height="2.6" rx="1" fill="#4a4a4a"/>
<path d="M5.5 17.2h12.8l-0.3 7.6h-12.2z" fill="url(#pg)"/></svg>
<div class="t" style="left:494px;top:562px;font-size:12px;line-height:12px;color:#0000ff;transform:scaleX(0.867);transform-origin:0 0;">Print-F6</div>
<div style="left:596px;top:550px;width:126px;height:35px;background:#dfdfdf"></div>
<svg style="position:absolute;left:611px;top:556px" width="26" height="26" viewBox="0 0 26 26">
<defs><linearGradient id="rg" x1="0" y1="0" x2="0" y2="1"><stop offset="0" stop-color="#e88080"/><stop offset="0.45" stop-color="#cc2a2a"/><stop offset="1" stop-color="#a81414"/></linearGradient></defs>
<circle cx="13" cy="13" r="13" fill="#9e1a1a"/><circle cx="13" cy="13" r="12" fill="url(#rg)"/>
<path d="M7.5 7.5L18.5 18.5M18.5 7.5L7.5 18.5" stroke="#f2f2f2" stroke-width="3.8"/></svg>
<div class="t" style="left:639px;top:562px;font-size:12px;line-height:12px;color:#0000ff;transform:scaleX(0.883);transform-origin:0 0;">Delete-F5</div>
<div style="left:762px;top:550px;width:126px;height:35px;background:#dfdfdf"></div>
<svg style="position:absolute;left:780px;top:557px" width="23" height="24" viewBox="0 0 23 24">
<defs><linearGradient id="fb" x1="0" y1="0" x2="0" y2="1"><stop offset="0" stop-color="#555"/><stop offset="1" stop-color="#2a2a2a"/></linearGradient></defs>
<path d="M0 0.5h23v23.5H2L0 22z" fill="url(#fb)"/>
<rect x="4" y="0.5" width="15" height="11" fill="#e8eef6"/>
<rect x="4" y="3" width="15" height="1" fill="#c2d2e2"/><rect x="4" y="6" width="15" height="1" fill="#c2d2e2"/><rect x="4" y="9" width="15" height="1" fill="#c2d2e2"/>
<rect x="5" y="15" width="11" height="8" fill="#c8c8c8"/><rect x="6.5" y="17" width="4" height="5" fill="#1e1e1e"/></svg>
<div class="t" style="left:806px;top:562px;font-size:12px;line-height:12px;color:#0000ff;transform:scaleX(0.911);transform-origin:0 0;">Save-F2</div>
<div style="left:918px;top:550px;width:126px;height:40px;background:#dfdfdf"></div>
<svg style="position:absolute;left:934px;top:556px" width="32" height="32" viewBox="0 0 32 32"><circle cx="16" cy="16" r="16" fill="#3f8d22"/><circle cx="16" cy="16" r="15" fill="url(#gr)"/><circle cx="16" cy="16" r="13.8" fill="url(#gg)"/><path d="M13.5 6.5h5v7h7v5h-7v7h-5v-7h-7v-5h7z" fill="url(#pw)"/></svg>
<div class="t" style="left:968px;top:565px;font-size:12px;line-height:12px;color:#0000ff;transform:scaleX(0.885);transform-origin:0 0;">New-F1</div>
</body></html>
